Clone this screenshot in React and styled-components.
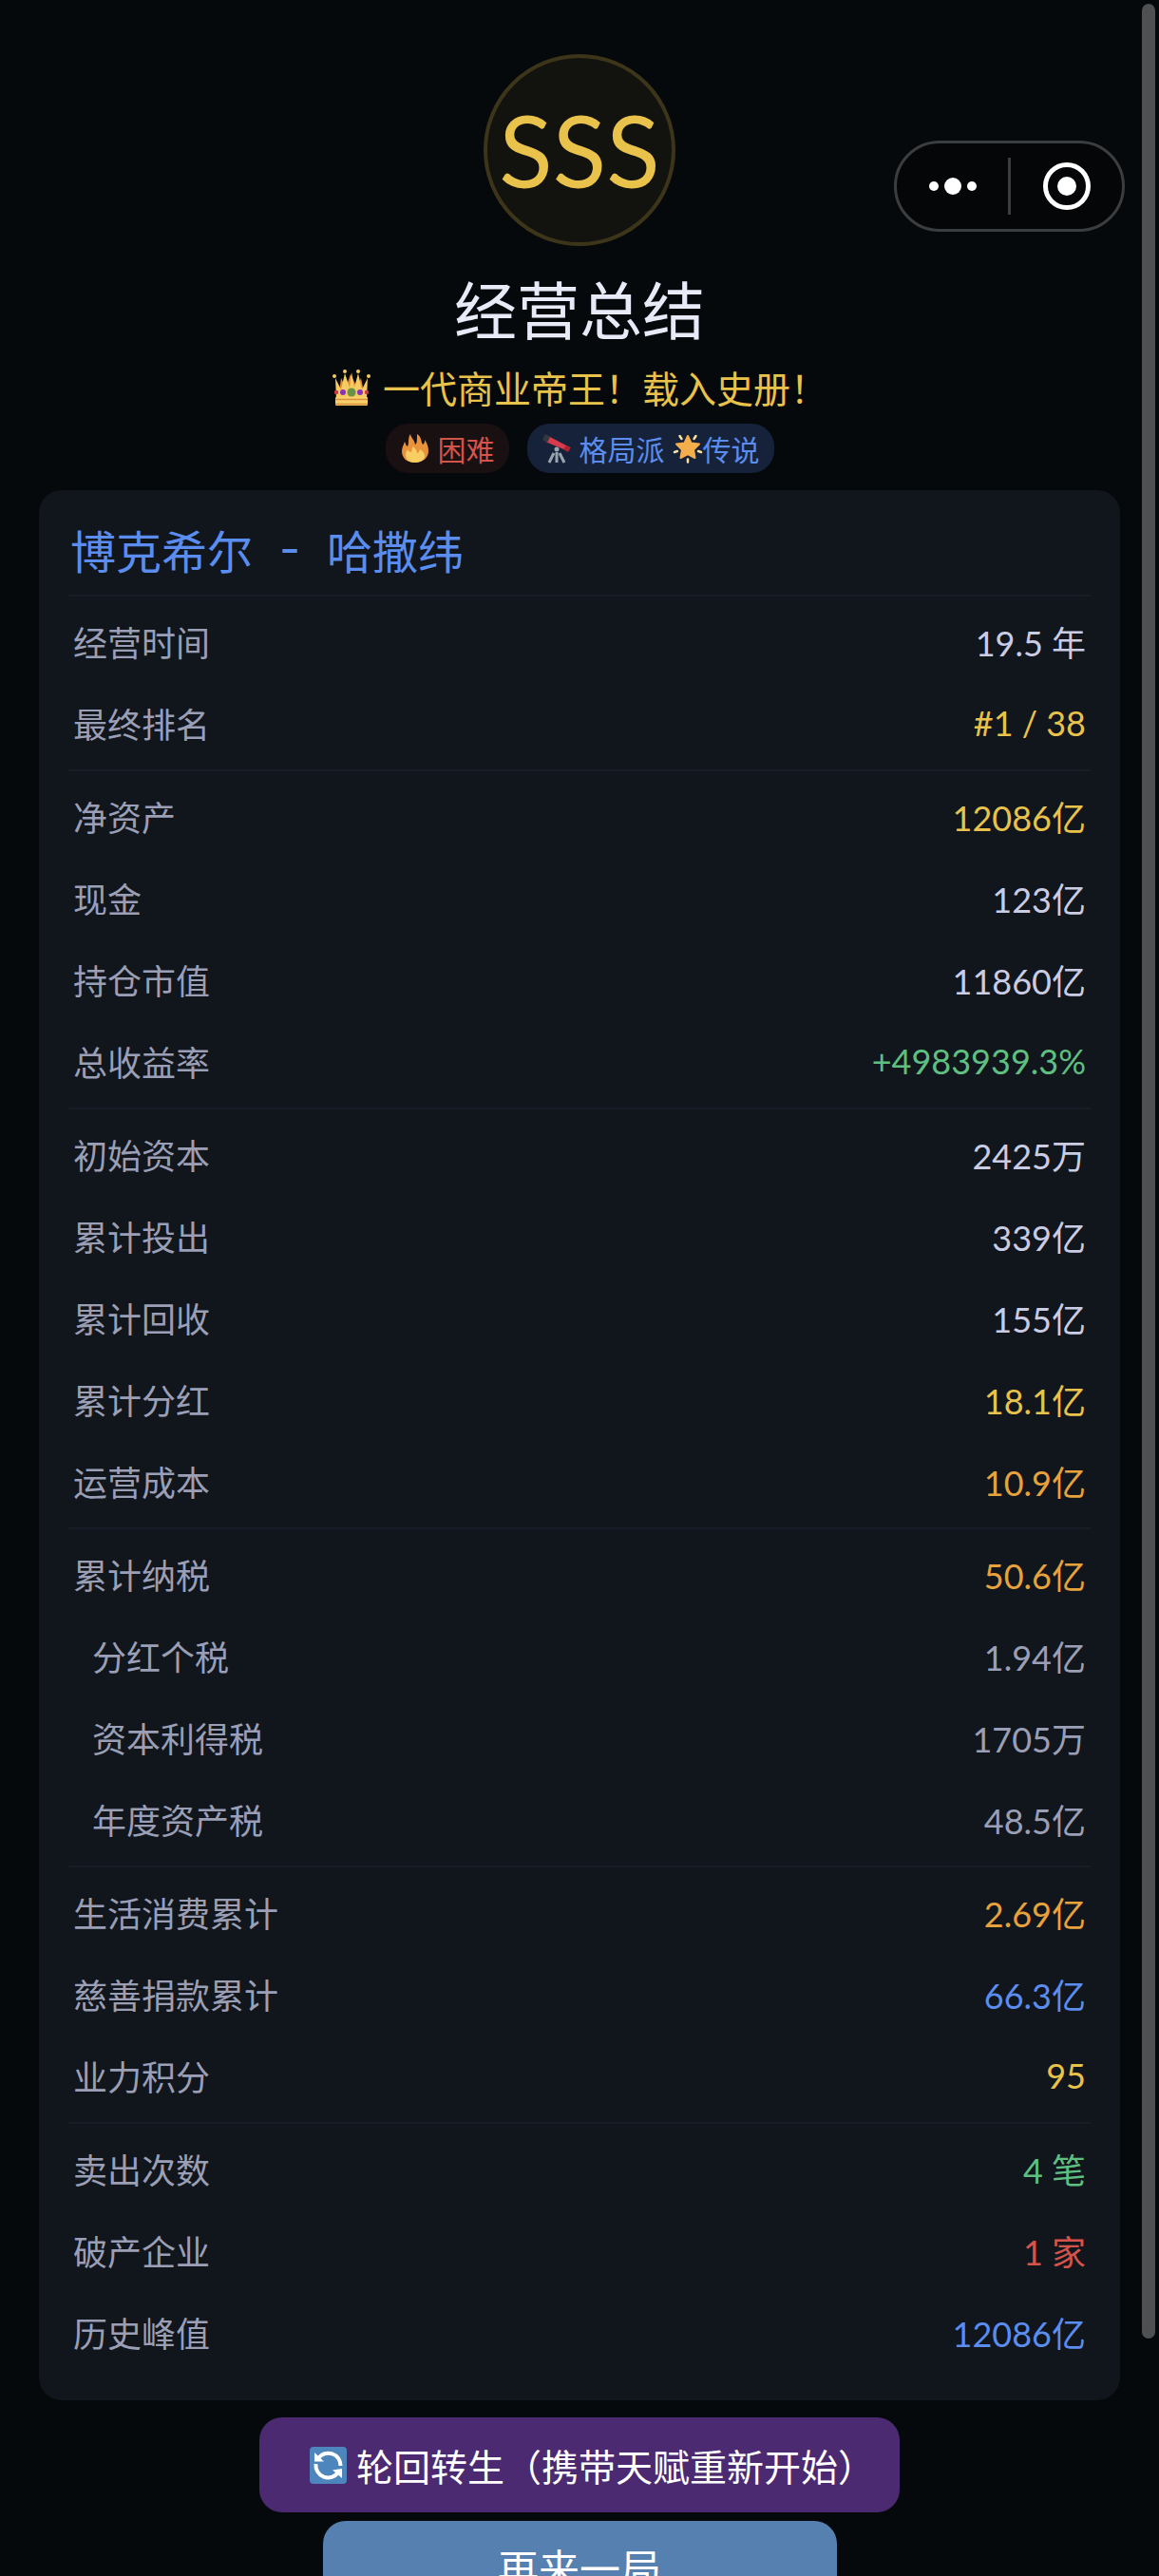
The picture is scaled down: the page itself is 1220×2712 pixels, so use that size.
import React from 'react';
import styled, { createGlobalStyle } from 'styled-components';

const colors = {
  text: '#c9cce2',
  muted: '#9a9fb5',
  gold: '#e8c24a',
  orange: '#e8a23c',
  green: '#5fbf80',
  red: '#d4534a',
  blue: '#5b8def',
};

const GlobalStyle = createGlobalStyle`
  * {
    box-sizing: border-box;
  }

  body {
    margin: 0;
    background: #05090c;
    color: ${colors.text};
    font-family: 'Noto Sans CJK SC', sans-serif;
  }
`;

const Screen = styled.div`
  height: 100vh;
  overflow-y: auto;
  scrollbar-width: none;
`;

const Page = styled.main`
  display: flex;
  flex-direction: column;
  align-items: center;
  padding: 57px 41px 60px;
`;

const Grade = styled.div`
  display: flex;
  align-items: center;
  justify-content: center;
  width: 202px;
  height: 202px;
  border: 4px solid #3d351a;
  border-radius: 50%;
  background: #12120e;
  color: ${colors.gold};
  font-family: Lato, sans-serif;
  font-size: 104px;
  line-height: 1;
`;

const Title = styled.h1`
  margin: 24px 0 0;
  color: #e9eaf8;
  font-size: 66px;
  font-weight: 400;
  line-height: 80px;
`;

const Subtitle = styled.p`
  display: flex;
  align-items: center;
  gap: 12px;
  margin: 18px 0 0;
  color: ${colors.gold};
  font-size: 39px;
  line-height: 52px;
`;

const Tags = styled.div`
  display: flex;
  gap: 19px;
  margin-top: 13px;
`;

const Tag = styled.span`
  display: flex;
  align-items: center;
  gap: 8px;
  height: 52px;
  padding: 0 15px;
  border-radius: 24px;
  background: ${(props) => (props.$tone === 'red' ? '#181011' : '#162239')};
  color: ${(props) => colors[props.$tone]};
  font-size: 30px;
`;

const TagGroup = styled.span`
  display: flex;
  align-items: center;
`;

const Card = styled.section`
  align-self: stretch;
  margin-top: 18px;
  padding: 30px 31px 28px;
  border-radius: 24px;
  background: #11151c;
`;

const CardTitle = styled.h2`
  display: flex;
  gap: 28px;
  margin: 0;
  padding: 0 2px 16px;
  color: ${colors.blue};
  font-size: 48px;
  font-weight: 400;
  line-height: 64px;
`;

const Dash = styled.span`
  font-family: Inter, sans-serif;
`;

const Group = styled.dl`
  margin: 0;
  padding: 5px;
  border-top: 2px solid #191d27;

  &:last-child {
    padding-bottom: 0;
  }
`;

const Row = styled.div`
  display: flex;
  align-items: center;
  justify-content: space-between;
  height: 86px;
  padding-bottom: 3px;
  padding-left: ${(props) => (props.$sub ? '20px' : '0')};
  font-size: 36px;
`;

const Label = styled.dt`
  color: ${colors.muted};
`;

const Value = styled.dd`
  margin: 0;
  color: ${(props) => colors[props.$tone]};
  font-family: Lato, 'Noto Sans CJK SC', sans-serif;
`;

const Button = styled.button`
  display: flex;
  align-items: center;
  justify-content: center;
  flex-shrink: 0;
  height: 100px;
  border: none;
  border-radius: 24px;
  color: #fff;
  font-family: inherit;
  cursor: pointer;
`;

const RebirthButton = styled(Button)`
  gap: 10px;
  margin-top: 18px;
  padding: 0 26px 0 53px;
  background: #4b2a72;
  font-size: 39px;
`;

const AgainButton = styled(Button)`
  width: 541px;
  height: 96px;
  margin-top: 9px;
  background: #5680b0;
  font-size: 43px;
`;

const Capsule = styled.div`
  position: fixed;
  top: 148px;
  right: 36px;
  display: flex;
  align-items: center;
  width: 243px;
  height: 96px;
  border: 3px solid #3c3d3f;
  border-radius: 48px;
  background: #050608;
`;

const CapsuleButton = styled.button`
  display: flex;
  flex: 1;
  align-items: center;
  justify-content: center;
  height: 60px;
  padding: 0;
  border: none;
  background: none;
  cursor: pointer;

  & + & {
    border-left: 3px solid #3c3d3f;
  }
`;

const ScrollThumb = styled.div`
  position: fixed;
  top: 4px;
  right: 4px;
  width: 14px;
  height: calc(91vh - 10px);
  border-radius: 7px;
  background: #4f5052;
`;

function CrownIcon() {
  return (
    <svg width="42" height="42" viewBox="0 0 42 42" aria-hidden="true">
      <path d="M8 27 L10 12 L15 22 L20 8 L27 22 L31 12 L34 27Z" fill="#e08a34" />
      <path d="M4 12 L10 24 L14 7 L19 22 L21 6 L24 22 L28 7 L32 24 L38 12 L37 34 H5Z" fill="#f5cb62" />
      <g fill="#f5cb62">
        <circle cx="3" cy="10" r="2" />
        <circle cx="14" cy="5" r="2" />
        <circle cx="28" cy="5" r="2" />
        <circle cx="39" cy="10" r="2" />
      </g>
      <rect x="4" y="32" width="34" height="9" rx="1" fill="#f8d06a" />
      <path d="M4 34.500 H38 M4 39.500 H38" stroke="#d98f3c" strokeWidth="1.500" />
      <circle cx="21" cy="27" r="4.500" fill="#689245" />
      <circle cx="12" cy="27" r="3" fill="#8b2fc0" />
      <circle cx="30" cy="27" r="3" fill="#8b2fc0" />
      <circle cx="5" cy="27" r="2.200" fill="#c8394b" />
      <circle cx="37" cy="27" r="2.200" fill="#c8394b" />
    </svg>
  );
}

function FireIcon() {
  return (
    <svg width="32" height="32" viewBox="0 0 32 32" aria-hidden="true">
      <path
        d="M15 31C7 31 2 26 2 19C2 15 4 12 5 9C6 11 6 13 8 14C10 10 8 5 11 1C12 6 15 6 16 12C18 11 18 8 18 1C23 4 22 9 24 12C26 11 26 9 26 7C29 11 30 15 30 19C30 26 24 31 15 31Z"
        fill="#e8923c"
      />
      <path
        d="M16 31C9 31 6 27 6 23C6 20 7 19 8 17C9 19 10 20 12 20C13 18 12 16 14 14C16 16 18 18 18 21C20 21 20 19 21 17C24 19 26 21 26 24C26 28 22 31 16 31Z"
        fill="#f8cd62"
      />
    </svg>
  );
}

function TelescopeIcon() {
  return (
    <svg width="32" height="32" viewBox="0 0 32 32" aria-hidden="true">
      <path d="M13 21 L8 31 M16 20 V31 M19 21 L24 31" stroke="#98a4ae" strokeWidth="3" />
      <circle cx="16" cy="17" r="2.500" fill="#98a4ae" />
      <path d="M7 3 L30 15 L28 19 L4 9Z" fill="#d63b4b" />
      <path d="M4 1 L9 4 L6 10 L1 7Z" fill="#34383d" />
      <path d="M26 13 L31 15 L28 20 L23 17Z" fill="#a82433" />
    </svg>
  );
}

function StarIcon() {
  return (
    <svg width="32" height="32" viewBox="0 0 32 32" aria-hidden="true">
      <path
        d="M16 3 L19.500 10.500 L28 11.500 L22 17.500 L23.500 26 L16 22 L8.500 26 L10 17.500 L4 11.500 L12.500 10.500Z"
        fill="#f5ae4c"
        stroke="#f5ae4c"
        strokeWidth="2"
        strokeLinejoin="round"
      />
      <path
        d="M7.500 3 L9.500 6 M24.500 3 L22.500 6 M2 20 L5 19 M30 20 L27 19 M16 27.500 V30.500"
        stroke="#fbe0a0"
        strokeWidth="2.500"
        strokeLinecap="round"
      />
    </svg>
  );
}

function CycleIcon() {
  return (
    <svg width="39" height="39" viewBox="0 0 39 39" aria-hidden="true">
      <rect width="39" height="39" rx="4" fill="#4d86bd" />
      <g fill="none" stroke="#fff" strokeWidth="4">
        <path d="M9 12 A13 13 0 0 1 32.500 20" />
        <path d="M6.500 18 A13 13 0 0 0 30 27" />
      </g>
      <path d="M5 6 V15.500 H15Z M34 23 V33 L24 24.500Z" fill="#fff" />
    </svg>
  );
}

function MoreIcon() {
  return (
    <svg width="50" height="18" viewBox="0 0 50 18" fill="#fff" aria-hidden="true">
      <circle cx="5" cy="9" r="5" />
      <circle cx="25" cy="9" r="9" />
      <circle cx="45" cy="9" r="5" />
    </svg>
  );
}

function CloseIcon() {
  return (
    <svg width="50" height="50" viewBox="0 0 50 50" aria-hidden="true">
      <circle cx="25" cy="25" r="22.500" fill="none" stroke="#fff" strokeWidth="5" />
      <circle cx="25" cy="25" r="10" fill="#fff" />
    </svg>
  );
}

const groups = [
  [
    { label: '经营时间', value: '19.5 年' },
    { label: '最终排名', value: '#1 / 38', tone: 'gold' },
  ],
  [
    { label: '净资产', value: '12086亿', tone: 'gold' },
    { label: '现金', value: '123亿' },
    { label: '持仓市值', value: '11860亿' },
    { label: '总收益率', value: '+4983939.3%', tone: 'green' },
  ],
  [
    { label: '初始资本', value: '2425万' },
    { label: '累计投出', value: '339亿' },
    { label: '累计回收', value: '155亿' },
    { label: '累计分红', value: '18.1亿', tone: 'gold' },
    { label: '运营成本', value: '10.9亿', tone: 'orange' },
  ],
  [
    { label: '累计纳税', value: '50.6亿', tone: 'orange' },
    { label: '分红个税', value: '1.94亿', tone: 'muted', sub: true },
    { label: '资本利得税', value: '1705万', tone: 'muted', sub: true },
    { label: '年度资产税', value: '48.5亿', tone: 'muted', sub: true },
  ],
  [
    { label: '生活消费累计', value: '2.69亿', tone: 'orange' },
    { label: '慈善捐款累计', value: '66.3亿', tone: 'blue' },
    { label: '业力积分', value: '95', tone: 'gold' },
  ],
  [
    { label: '卖出次数', value: '4 笔', tone: 'green' },
    { label: '破产企业', value: '1 家', tone: 'red' },
    { label: '历史峰值', value: '12086亿', tone: 'blue' },
  ],
];

function StatGroup({ rows }) {
  return (
    <Group>
      {rows.map((row) => (
        <Row key={row.label} $sub={row.sub}>
          <Label>{row.label}</Label>
          <Value $tone={row.tone || 'text'}>{row.value}</Value>
        </Row>
      ))}
    </Group>
  );
}

function App() {
  return (
    <Screen>
      <GlobalStyle />
      <Page>
        <Grade>SSS</Grade>
        <Title>经营总结</Title>
        <Subtitle>
          <CrownIcon />
          一代商业帝王！载入史册！
        </Subtitle>
        <Tags>
          <Tag $tone="red">
            <FireIcon />
            困难
          </Tag>
          <Tag $tone="blue">
            <TelescopeIcon />
            格局派
            <TagGroup>
              <StarIcon />
              传说
            </TagGroup>
          </Tag>
        </Tags>
        <Card>
          <CardTitle>
            <span>博克希尔</span>
            <Dash>-</Dash>
            <span>哈撒纬</span>
          </CardTitle>
          {groups.map((rows) => (
            <StatGroup key={rows[0].label} rows={rows} />
          ))}
        </Card>
        <RebirthButton type="button">
          <CycleIcon />
          轮回转生（携带天赋重新开始）
        </RebirthButton>
        <AgainButton type="button">再来一局</AgainButton>
      </Page>
      <Capsule>
        <CapsuleButton type="button" aria-label="更多">
          <MoreIcon />
        </CapsuleButton>
        <CapsuleButton type="button" aria-label="关闭">
          <CloseIcon />
        </CapsuleButton>
      </Capsule>
      <ScrollThumb />
    </Screen>
  );
}

export default App;
